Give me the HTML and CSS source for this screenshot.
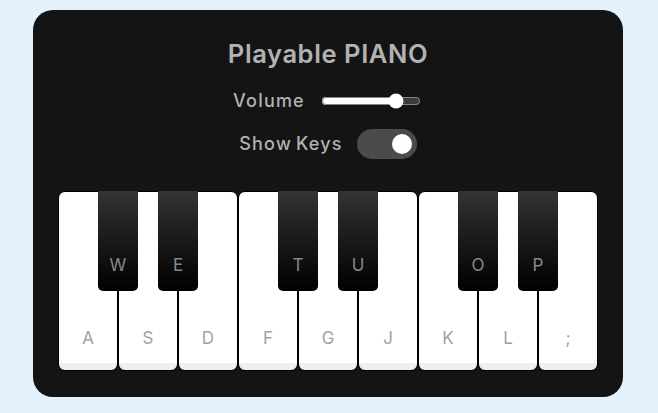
FILE: index.html
```html
<!DOCTYPE html>
<html lang="en">
<head>
<meta charset="utf-8">
<title>Playable Piano</title>
<link rel="stylesheet" href="styles.css">
</head>
<body>
<div class="wrapper">
  <header class="header">
    <h2 class="title">Playable PIANO</h2>
    <div class="column volume-slider">
      <span class="label">Volume</span>
      <input class="range" type="range" min="0" max="1" value="0.8" step="any">
    </div>
    <div class="column keys-checkbox">
      <span class="label">Show Keys</span>
      <input class="toggle" type="checkbox" checked>
    </div>
  </header>
  <ul class="piano-keys">
    <li class="key white"><span>a</span></li>
    <li class="key black"><span>w</span></li>
    <li class="key white"><span>s</span></li>
    <li class="key black"><span>e</span></li>
    <li class="key white"><span>d</span></li>
    <li class="key white"><span>f</span></li>
    <li class="key black"><span>t</span></li>
    <li class="key white"><span>g</span></li>
    <li class="key black"><span>u</span></li>
    <li class="key white"><span>j</span></li>
    <li class="key white"><span>k</span></li>
    <li class="key black"><span>o</span></li>
    <li class="key white"><span>l</span></li>
    <li class="key black"><span>p</span></li>
    <li class="key white"><span>;</span></li>
  </ul>
</div>
</body>
</html>
```
FILE: styles.css
```css
* {
  box-sizing: border-box;
}

html, body {
  margin: 0;
  padding: 0;
}

body {
  background: #e3f2fd;
  min-height: 413px;
  display: flex;
  justify-content: center;
  align-items: flex-start;
  padding: 10px 2px 0 0;
  font-family: Inter, "Open Sans", "DejaVu Sans", sans-serif;
}

.wrapper {
  width: 590px;
  padding: 28px 25px 26px;
  border-radius: 20px;
  background: #141414;
}

.header {
  display: flex;
  flex-direction: column;
  align-items: center;
  color: #b2b2b2;
}

.title {
  margin: 0;
  font-size: 25.5px;
  line-height: 32px;
  font-weight: 600;
  letter-spacing: 0.6px;
  color: #b2b2b2;
}

.column {
  display: flex;
  align-items: center;
}

.volume-slider {
  margin-top: 19px;
  height: 24px;
}

.keys-checkbox {
  margin-top: 16px;
  height: 30px;
}

.label {
  font-size: 18px;
  font-weight: 500;
  line-height: 20px;
  letter-spacing: 1.2px;
  word-spacing: -2px;
  margin-right: 14px;
  color: #b2b2b2;
}

.range {
  width: 100px;
  margin: 0 2px;
  accent-color: #fff;
}

.toggle {
  appearance: none;
  -webkit-appearance: none;
  position: relative;
  width: 60px;
  height: 30px;
  margin: 0;
  border-radius: 30px;
  background: #4b4b4b;
}

.toggle::before {
  content: "";
  position: absolute;
  top: 5px;
  left: 5px;
  width: 20px;
  height: 20px;
  border-radius: 50%;
  background: #8c8c8c;
}

.toggle:checked::before {
  left: 35px;
  background: #fff;
}

.piano-keys {
  display: flex;
  list-style: none;
  margin: 32px 0 0;
  padding: 0;
}

.key {
  position: relative;
  display: flex;
  justify-content: center;
  align-items: flex-end;
  text-transform: uppercase;
  flex-shrink: 0;
}

.key span {
  font-size: 17px;
  line-height: 20px;
  color: #a2a2a2;
}

.white {
  width: 60px;
  height: 180px;
  border: 1px solid #000;
  border-radius: 7px;
  background: linear-gradient(#fff 96%, #eee 4%);
  padding-bottom: 22px;
}

.black {
  z-index: 2;
  width: 40px;
  height: 100px;
  margin: 0 -20px;
  border-radius: 0 0 5px 5px;
  background: linear-gradient(#333, #000);
  padding-bottom: 16px;
}

.black span {
  color: #888;
}
```
